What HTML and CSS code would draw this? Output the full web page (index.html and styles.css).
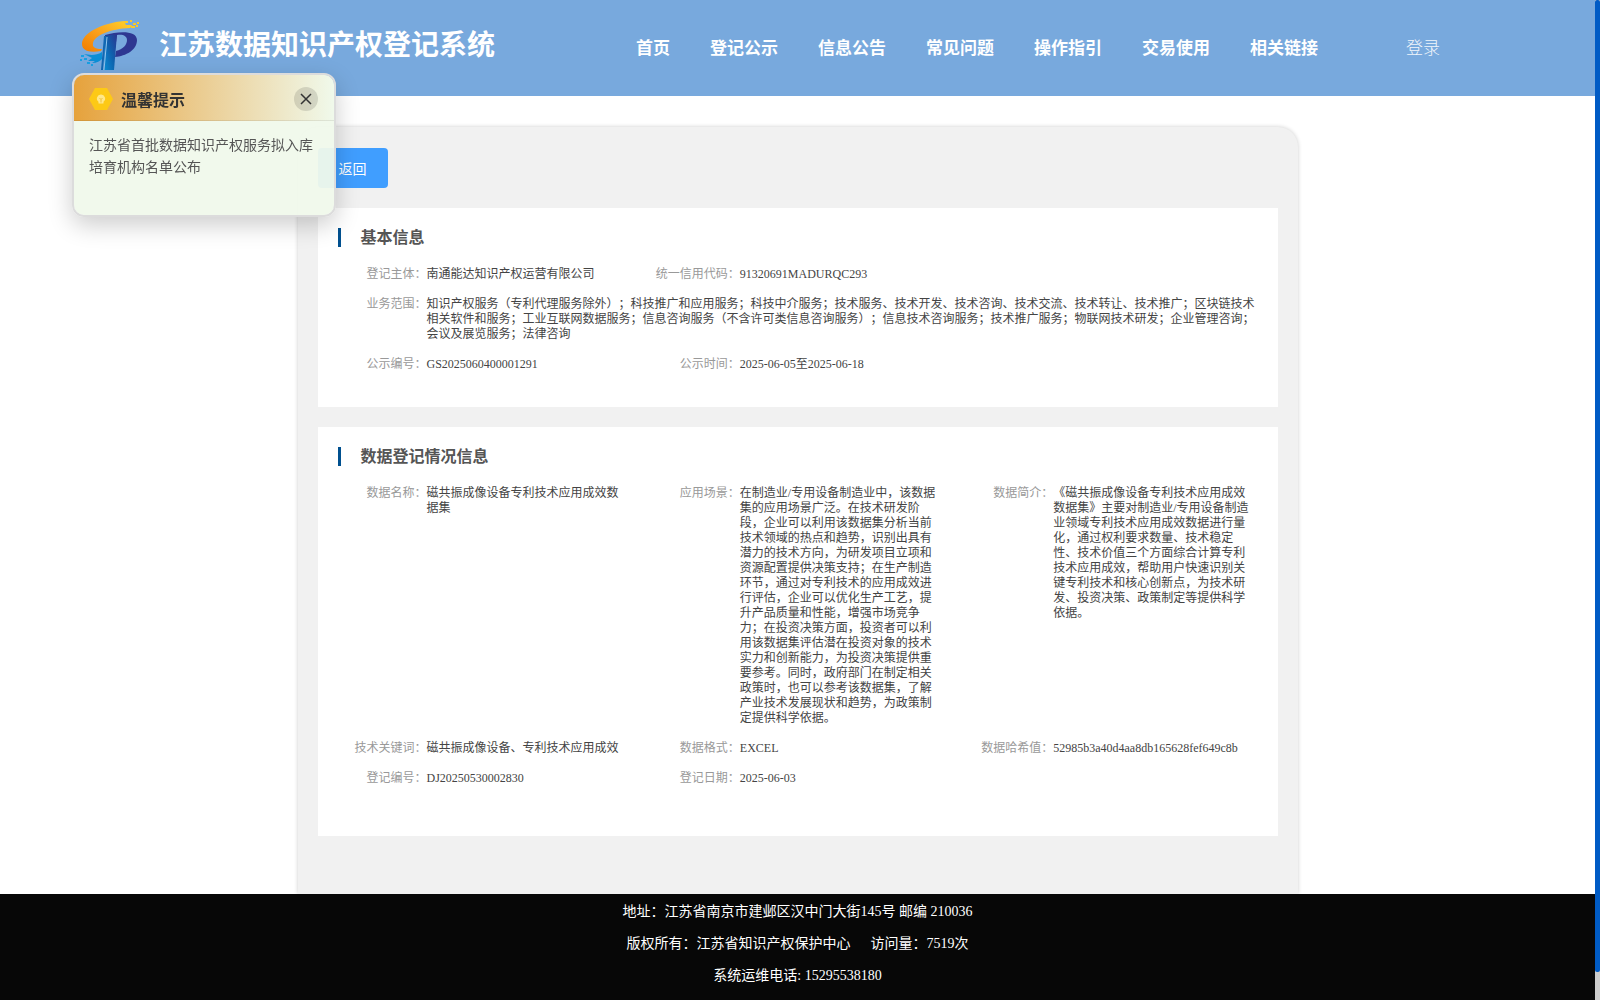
FILE: index.html
```html
<!DOCTYPE html>
<html lang="zh-CN">
<head>
    <meta charset="UTF-8">
    <meta name="viewport" content="width=device-width, initial-scale=1.0">
    <title>江苏数据知识产权登记系统</title>
    <link rel="stylesheet" href="styles.css">
</head>
<body>
    <div class="page">
        <header class="header">
            <svg class="logo" viewBox="0 0 60 52" aria-hidden="true">
                <defs>
                    <linearGradient id="gold" x1="0" y1="1" x2="1" y2="0">
                        <stop offset="0" stop-color="#f07c00"/>
                        <stop offset="0.500" stop-color="#fba21c"/>
                        <stop offset="1" stop-color="#ffd42a"/>
                    </linearGradient>
                    <linearGradient id="stem" x1="0" y1="1" x2="1" y2="0">
                        <stop offset="0" stop-color="#0a8fd8"/>
                        <stop offset="0.500" stop-color="#0f62ae"/>
                        <stop offset="1" stop-color="#2b3590"/>
                    </linearGradient>
                </defs>
                <path d="M44 1 C22 3 2 13 2 24 C2 31 10 33 21 31 L22 29 C15 29 12 27 13 23 C15 15 30 9 50 8 L52 5 L46 5 Z" fill="url(#gold)"/>
                <path d="M44 1h4v2h-4zM50 0h2v2h-2zM53 3h3v2h-3zM57 2h2v2h-2zM51 6h4v2h-4zM56 5h2v2h-2z" fill="#fbc926"/>
                <path d="M25 15 C38 11 57 10 57 20 C57 30 46 36 35 37 L36 31 C43 29 47 25 47 20 C47 16 43 14 37 15 L34 37 L25 37 Z" fill="#2e3791"/>
                <path d="M25 16 L37 14 L34 50 L24 50 Z" fill="url(#stem)"/>
                <path d="M24 16 L21 50 L23 50 L26 16 Z" fill="#1268b3"/>
                <path d="M22 32 C16 36 9 35 4 34 L12 38 L8 41 L15 41 L12 43 C17 43 20 41 22 39 Z" fill="#0b8fd6"/>
                <path d="M1 35h3v2h-3zM0 39h2v2h-2zM4 38h3v2h-3zM7 42h3v2h-3zM11 44h2v2h-2z" fill="#18a0e3"/>
                <path d="M27 17 L24 50" stroke="#8fc4ee" stroke-width="1" fill="none"/>
            </svg>
            <h1 class="site-title">江苏数据知识产权登记系统</h1>
            <nav class="nav">
                <a href="#">首页</a>
                <a href="#">登记公示</a>
                <a href="#">信息公告</a>
                <a href="#">常见问题</a>
                <a href="#">操作指引</a>
                <a href="#">交易使用</a>
                <a href="#">相关链接</a>
            </nav>
            <a class="login" href="#">登录</a>
        </header>

        <main class="container">
            <button class="back-btn" type="button">返回</button>

            <section class="card">
                <h2 class="card-title">基本信息</h2>
                <dl class="info">
                    <div class="item"><dt>登记主体：</dt><dd>南通能达知识产权运营有限公司</dd></div>
                    <div class="item item-two"><dt>统一信用代码：</dt><dd>91320691MADURQC293</dd></div>
                    <div class="item item-full"><dt>业务范围：</dt><dd>知识产权服务（专利代理服务除外）；科技推广和应用服务；科技中介服务；技术服务、技术开发、技术咨询、技术交流、技术转让、技术推广；区块链技术相关软件和服务；工业互联网数据服务；信息咨询服务（不含许可类信息咨询服务）；信息技术咨询服务；技术推广服务；物联网技术研发；企业管理咨询；会议及展览服务；法律咨询</dd></div>
                    <div class="item"><dt>公示编号：</dt><dd>GS2025060400001291</dd></div>
                    <div class="item"><dt>公示时间：</dt><dd>2025-06-05至2025-06-18</dd></div>
                </dl>
            </section>

            <section class="card card-data">
                <h2 class="card-title">数据登记情况信息</h2>
                <dl class="info">
                    <div class="item"><dt>数据名称：</dt><dd>磁共振成像设备专利技术应用成效数据集</dd></div>
                    <div class="item"><dt>应用场景：</dt><dd>在制造业/专用设备制造业中，该数据集的应用场景广泛。在技术研发阶段，企业可以利用该数据集分析当前技术领域的热点和趋势，识别出具有潜力的技术方向，为研发项目立项和资源配置提供决策支持；在生产制造环节，通过对专利技术的应用成效进行评估，企业可以优化生产工艺，提升产品质量和性能，增强市场竞争力；在投资决策方面，投资者可以利用该数据集评估潜在投资对象的技术实力和创新能力，为投资决策提供重要参考。同时，政府部门在制定相关政策时，也可以参考该数据集，了解产业技术发展现状和趋势，为政策制定提供科学依据。</dd></div>
                    <div class="item"><dt>数据简介：</dt><dd>《磁共振成像设备专利技术应用成效数据集》主要对制造业/专用设备制造业领域专利技术应用成效数据进行量化，通过权利要求数量、技术稳定性、技术价值三个方面综合计算专利技术应用成效，帮助用户快速识别关键专利技术和核心创新点，为技术研发、投资决策、政策制定等提供科学依据。</dd></div>
                    <div class="item"><dt>技术关键词：</dt><dd>磁共振成像设备、专利技术应用成效</dd></div>
                    <div class="item"><dt>数据格式：</dt><dd>EXCEL</dd></div>
                    <div class="item"><dt>数据哈希值：</dt><dd>52985b3a40d4aa8db165628fef649c8b</dd></div>
                    <div class="item"><dt>登记编号：</dt><dd>DJ20250530002830</dd></div>
                    <div class="item"><dt>登记日期：</dt><dd>2025-06-03</dd></div>
                </dl>
            </section>
        </main>

        <footer class="footer">
            <p>地址：江苏省南京市建邺区汉中门大街145号 邮编 210036</p>
            <p>版权所有：江苏省知识产权保护中心<span class="visits">访问量：7519次</span></p>
            <p>系统运维电话: 15295538180</p>
        </footer>
    </div>

    <div class="scrollbar"><div class="scrollbar-thumb"></div></div>

    <aside class="notice">
        <div class="notice-head">
            <svg class="notice-icon" viewBox="0 0 24 22" aria-hidden="true">
                <path d="M6 0h12l6 11-6 11H6L0 11z" fill="#fdc916"/>
                <path d="M12 6.500a4 4 0 0 0-2.500 7.200v1.800h5v-1.800A4 4 0 0 0 12 6.500z" fill="#ffe88a"/>
                <path d="M10.500 10l1.500 1.500 1.500-1.500M12 11.500v3" stroke="#e9b52a" stroke-width="0.800" fill="none"/>
            </svg>
            <h3>温馨提示</h3>
            <button class="notice-close" type="button" aria-label="关闭">
                <svg viewBox="0 0 12 12" aria-hidden="true"><path d="M1 1l10 10M11 1L1 11" stroke="#333" stroke-width="1.500" fill="none"/></svg>
            </button>
        </div>
        <p class="notice-body">江苏省首批数据知识产权服务拟入库培育机构名单公布</p>
    </aside>
</body>
</html>
```

FILE: styles.css
```css
* {
    box-sizing: border-box;
    margin: 0;
    padding: 0;
}
body {
    font-family: "Liberation Serif", "Noto Sans CJK SC", serif;
    font-size: 14px;
    color: #555;
    background: #fff;
    text-spacing-trim: space-all;
}
a {
    color: inherit;
    text-decoration: none;
}
button {
    border: none;
    font-family: inherit;
    cursor: pointer;
}
.page {
    height: 100vh;
    margin-right: 5px;
    overflow-y: auto;
    scrollbar-width: none;
}

/* scrollbar */
.scrollbar {
    position: fixed;
    top: 0;
    right: 0;
    bottom: 0;
    width: 5px;
    background: #ccc;
}
.scrollbar-thumb {
    height: 97.2%;
    border-radius: 2px;
    background: #005bc5;
}

/* header */
.header {
    display: flex;
    align-items: center;
    height: 96px;
    padding: 0 155px 4px 80px;
    background: #78a9dd;
    color: #fff;
    white-space: nowrap;
}
.logo {
    width: 60px;
    height: 52px;
}
.site-title {
    margin-left: 19px;
    font-size: 28px;
    line-height: 40px;
    font-weight: 600;
}
.nav {
    display: flex;
    gap: 40px;
    margin-left: auto;
    font-size: 17px;
    font-weight: 600;
}
.login {
    margin-left: 88px;
    font-size: 17px;
    font-weight: 300;
    opacity: 0.9;
}

/* content */
.container {
    max-width: 1000px;
    min-height: 767px;
    margin: 31px auto 0;
    padding: 21px 20px 20px;
    background: #f1f1f1;
    border-radius: 20px 20px 0 0;
    box-shadow: 0 0 4px rgba(0, 0, 0, 0.2);
}
.back-btn {
    display: block;
    width: 70px;
    height: 40px;
    margin-bottom: 20px;
    border-radius: 4px;
    background: #409eff;
    color: #fff;
    font-size: 14px;
}
.card {
    margin-bottom: 20px;
    padding: 20px 0 35px 20px;
    background: #fff;
}
.card-data {
    padding-bottom: 50px;
}
.card-title {
    margin-bottom: 20px;
    padding-left: 20px;
    border-left: 3px solid #00508f;
    font-size: 16px;
    line-height: 19px;
}
.info {
    display: grid;
    grid-template-columns: repeat(3, 1fr);
    row-gap: 15px;
    font-size: 12px;
    line-height: 15px;
}
.item {
    display: flex;
    padding-right: 22px;
}
.item-two {
    grid-column: span 2;
}
.item-full {
    grid-column: 1 / -1;
}
.item dt {
    flex: none;
    width: 89px;
    color: #999;
    text-align: right;
    white-space: nowrap;
}
.item dd {
    min-width: 0;
    color: #444;
}

/* footer */
.footer {
    padding: 2px 0 37px;
    background: #070707;
    color: #fff;
    text-align: center;
    line-height: 32px;
}
.visits {
    margin-left: 20px;
}

/* floating notice */
.notice {
    position: fixed;
    top: 73px;
    left: 72px;
    width: 264px;
    min-height: 144px;
    overflow: hidden;
    border: 2px solid #dcdcdc;
    border-radius: 12px;
    background: rgba(240, 249, 235, 0.95);
    background-clip: padding-box;
    box-shadow: 0 8px 24px rgba(0, 0, 0, 0.2);
}
.notice-head {
    display: flex;
    align-items: center;
    height: 46px;
    padding: 2px 16px 0 15px;
    border-bottom: 1px solid rgba(0, 0, 0, 0.08);
    background: linear-gradient(90deg, #e6a23c, #f0f9eb);
}
.notice-icon {
    width: 24px;
    height: 22px;
    margin-right: 8px;
}
.notice-head h3 {
    color: #333;
    font-size: 16px;
}
.notice-close {
    display: flex;
    align-items: center;
    justify-content: center;
    width: 24px;
    height: 24px;
    margin-left: auto;
    border-radius: 50%;
    background: rgba(0, 0, 0, 0.12);
}
.notice-close svg {
    width: 12px;
    height: 12px;
}
.notice-body {
    padding: 14px 15px;
    line-height: 22px;
}
```
